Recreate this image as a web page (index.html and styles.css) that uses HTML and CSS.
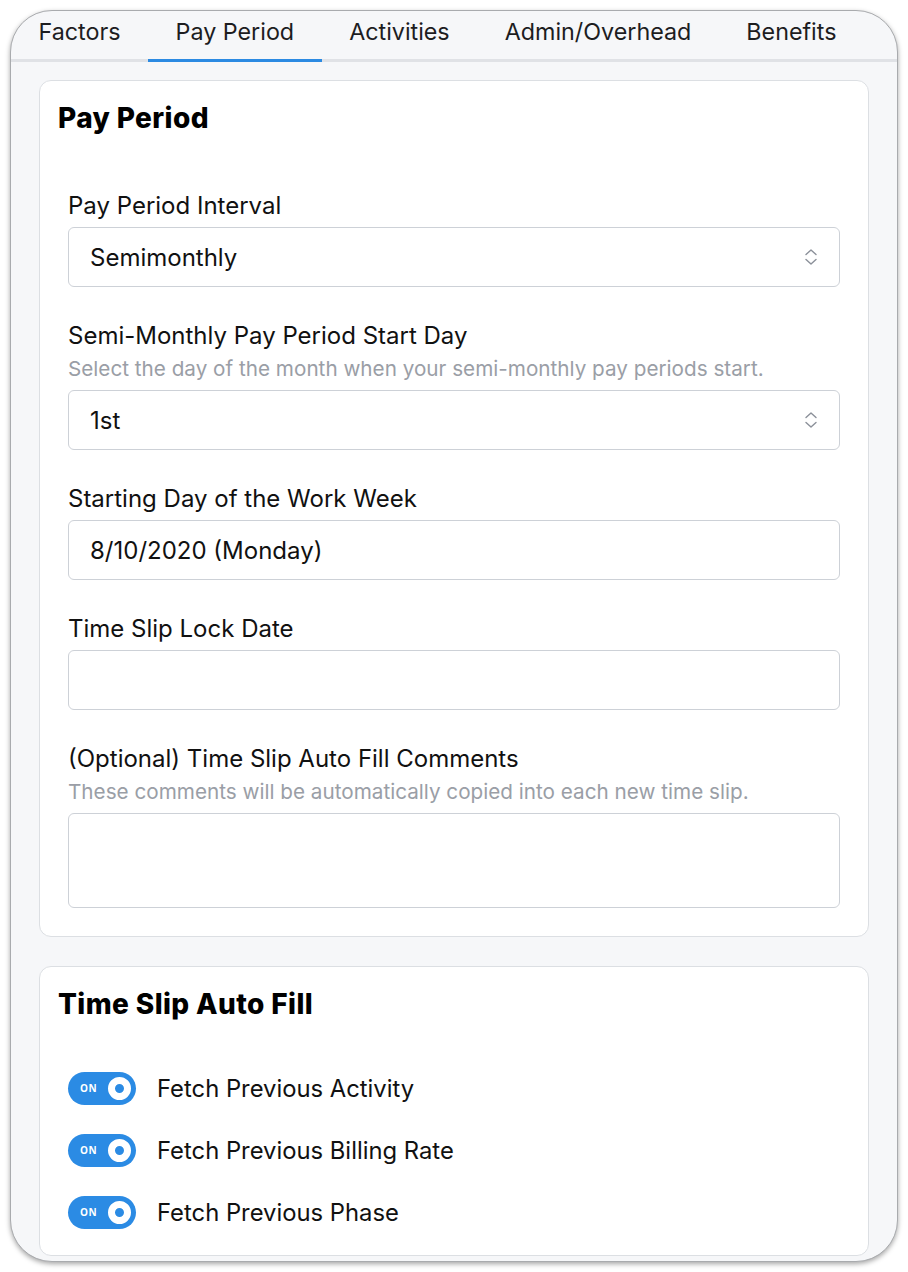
FILE: index.html
```html
<!DOCTYPE html>
<html lang="en">
<head>
<meta charset="utf-8">
<title>Pay Period</title>
<link rel="stylesheet" href="styles.css">
</head>
<body>
<div class="frame">
  <nav class="tabs">
    <div class="tab">Factors</div>
    <div class="tab active">Pay Period</div>
    <div class="tab">Activities</div>
    <div class="tab">Admin/Overhead</div>
    <div class="tab">Benefits</div>
  </nav>
  <main class="content">
    <section class="card">
      <h2 class="card-title">Pay Period</h2>
      <div class="fields">
        <div class="field">
          <div class="label">Pay Period Interval</div>
          <div class="control select">
            <span>Semimonthly</span>
            <svg class="chev" width="14" height="20" viewBox="0 0 14 20"><path d="M2 7.5 L7 3 L12 7.5 M2 12.5 L7 17 L12 12.5" fill="none" stroke="#8b9099" stroke-width="1.4" stroke-linecap="round" stroke-linejoin="round"/></svg>
          </div>
        </div>
        <div class="field">
          <div class="label">Semi-Monthly Pay Period Start Day</div>
          <div class="help">Select the day of the month when your semi-monthly pay periods start.</div>
          <div class="control select">
            <span>1st</span>
            <svg class="chev" width="14" height="20" viewBox="0 0 14 20"><path d="M2 7.5 L7 3 L12 7.5 M2 12.5 L7 17 L12 12.5" fill="none" stroke="#8b9099" stroke-width="1.4" stroke-linecap="round" stroke-linejoin="round"/></svg>
          </div>
        </div>
        <div class="field">
          <div class="label">Starting Day of the Work Week</div>
          <div class="control"><span>8/10/2020 (Monday)</span></div>
        </div>
        <div class="field">
          <div class="label">Time Slip Lock Date</div>
          <div class="control"></div>
        </div>
        <div class="field">
          <div class="label">(Optional) Time Slip Auto Fill Comments</div>
          <div class="help">These comments will be automatically copied into each new time slip.</div>
          <div class="control textarea"></div>
        </div>
      </div>
    </section>
    <section class="card card2">
      <h2 class="card-title">Time Slip Auto Fill</h2>
      <div class="toggles">
        <div class="toggle-row"><div class="toggle"><span class="on">ON</span><span class="knob"></span></div><span class="toggle-label">Fetch Previous Activity</span></div>
        <div class="toggle-row"><div class="toggle"><span class="on">ON</span><span class="knob"></span></div><span class="toggle-label">Fetch Previous Billing Rate</span></div>
        <div class="toggle-row"><div class="toggle"><span class="on">ON</span><span class="knob"></span></div><span class="toggle-label">Fetch Previous Phase</span></div>
      </div>
    </section>
  </main>
</div>
</body>
</html>
```
FILE: styles.css
```css
html, body { margin: 0; padding: 0; background: #ffffff; }
body {
  padding: 10px;
  font-family: Inter, "Noto Sans", "Liberation Sans", sans-serif;
  color: #111111;
}
.frame {
  width: 886px;
  height: 1250px;
  border: 1px solid #a9abae;
  border-radius: 42px;
  background: #f6f7f9;
  overflow: hidden;
  box-shadow: 0 2px 5px rgba(0,0,0,0.35);
}
.tabs {
  display: flex;
  height: 48px;
  border-bottom: 3px solid #e0e2e6;
}
.tab {
  padding: 0 27.5px;
  font-size: 23.3px;
  line-height: 42px;
  color: #1d1d1f;
  position: relative;
}
.tab.active::after {
  content: "";
  position: absolute;
  left: 0; right: 0; bottom: -3px;
  height: 3px;
  background: #2b8ae2;
}
.content {
  padding: 18px 28px;
  display: flex;
  flex-direction: column;
  gap: 29px;
}
.card {
  background: #ffffff;
  border: 1px solid #dcdfe3;
  border-radius: 12px;
  padding: 22px 18px 28px;
}
.card-title {
  margin: 0;
  font-size: 28px;
  line-height: 30px;
  font-weight: 800;
  letter-spacing: 0.4px;
  color: #000;
}
.fields {
  display: flex;
  flex-direction: column;
  gap: 35px;
  padding: 59px 10px 0;
}
.label {
  font-size: 24px;
  line-height: 28px;
  margin-bottom: 7px;
  color: #111;
}
.help {
  font-size: 20.7px;
  line-height: 24px;
  color: #9a9ea6;
  margin-bottom: 9px;
}
.control {
  height: 58px;
  border: 1px solid #cdd1d7;
  border-radius: 6px;
  display: flex;
  align-items: center;
  justify-content: space-between;
  padding: 0 21px 0 21px;
  font-size: 24px;
  color: #111;
}
.textarea { height: 93px; }
.card2 { padding-bottom: 26px; }
.toggles {
  margin: 52px 10px 0;
  display: flex;
  flex-direction: column;
  gap: 28px;
}
.toggle-row {
  display: flex;
  align-items: center;
  height: 34px;
}
.toggle {
  width: 68px;
  height: 33px;
  border-radius: 17px;
  background: #2b8be4;
  display: flex;
  align-items: center;
  justify-content: space-between;
  padding: 0 5px 0 12px;
  box-sizing: border-box;
}
.on {
  color: #fff;
  font-size: 10px;
  font-weight: 700;
  letter-spacing: 0.5px;
  font-family: "Open Sans", sans-serif;
}
.knob {
  width: 9px;
  height: 9px;
  border-radius: 50%;
  border: 7px solid #fff;
  background: #2b8be4;
}
.toggle-label {
  margin-left: 21px;
  font-size: 23.8px;
  color: #111;
}
```
